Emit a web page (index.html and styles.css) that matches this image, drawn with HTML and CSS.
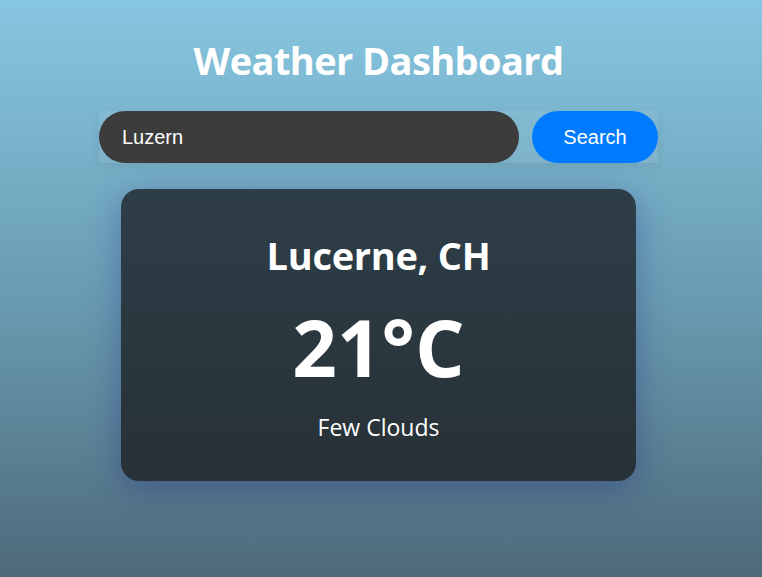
FILE: index.html
```html
<!DOCTYPE html>
<html lang="en">
<head>
<meta charset="utf-8">
<title>Weather Dashboard</title>
<link rel="stylesheet" href="styles.css">
</head>
<body>
<main class="app">
  <h1 class="title">Weather Dashboard</h1>
  <form class="search">
    <input class="search-input" type="text" value="Luzern">
    <button class="search-btn" type="button">Search</button>
  </form>
  <section class="card">
    <h2 class="city">Lucerne, CH</h2>
    <div class="temp">21°C</div>
    <p class="desc">Few Clouds</p>
  </section>
</main>
</body>
</html>
```

FILE: styles.css
```css
html, body {
  margin: 0;
  height: 100%;
}
body {
  background: linear-gradient(180deg, #87c6e1 0%, #6a9db3 50%, #4e6a7a 100%);
  font-family: "Open Sans", "Noto Sans", sans-serif;
  color: #fff;
  overflow: hidden;
}
.app {
  display: flex;
  flex-direction: column;
  align-items: center;
  padding-top: 33px;
  padding-right: 5px;
}
.title {
  margin: 0;
  font-size: 38px;
  font-weight: 700;
  line-height: 54px;
  letter-spacing: -0.6px;
}
.search {
  display: flex;
  gap: 13px;
  margin-top: 24px;
  width: 559px;
  background: rgba(255, 255, 255, 0.06);
  box-shadow: 0 4px 12px rgba(0, 0, 0, 0.06);
}
.search-input {
  flex: 1;
  height: 52px;
  box-sizing: border-box;
  border: none;
  border-radius: 26px;
  background: #3c3c3c;
  color: #fff;
  font-family: "Liberation Sans", Arial, sans-serif;
  font-size: 20px;
  padding: 0 23px;
  outline: none;
}
.search-btn {
  width: 126px;
  height: 52px;
  border: none;
  border-radius: 26px;
  background: #007bff;
  color: #fff;
  font-family: "Liberation Sans", Arial, sans-serif;
  font-size: 20px;
  padding: 0;
}
.card {
  margin-top: 26px;
  width: 515px;
  height: 292px;
  box-sizing: border-box;
  border-radius: 18px;
  background: linear-gradient(180deg, #2e3e48 0%, #273137 100%);
  box-shadow: 0 8px 32px rgba(31, 38, 135, 0.37);
  display: flex;
  flex-direction: column;
  align-items: center;
  padding-top: 41px;
}
.city {
  margin: 0;
  font-size: 38px;
  font-weight: 700;
  line-height: 50px;
  letter-spacing: -0.3px;
}
.temp {
  margin-top: 22px;
  font-size: 78px;
  font-weight: 700;
  line-height: 90px;
  letter-spacing: 0;
}
.desc {
  margin: 20px 0 0;
  font-size: 23px;
  line-height: 30px;
}
```
